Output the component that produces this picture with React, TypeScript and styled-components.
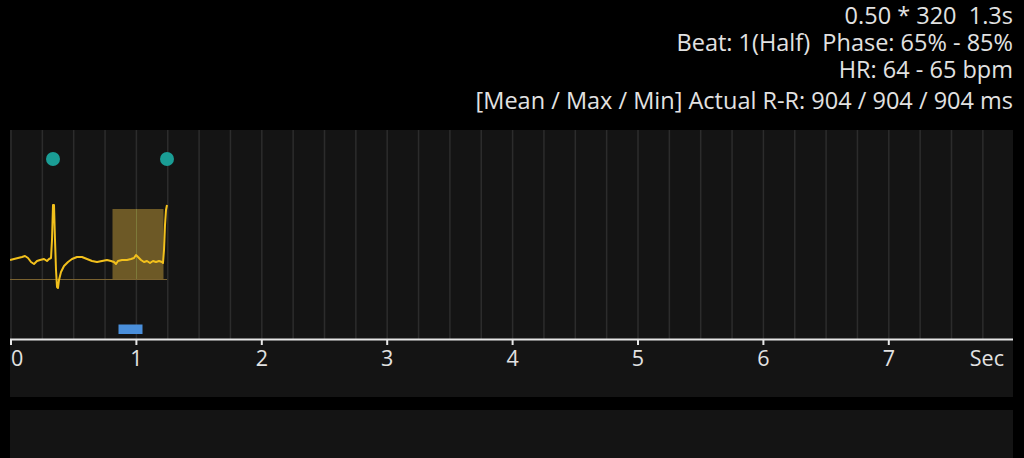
import React from "react";
import styled, { createGlobalStyle } from "styled-components";

const GlobalStyle = createGlobalStyle`
  html, body { margin: 0; padding: 0; background: #000; }
  body { font-family: "Open Sans", "Noto Sans", sans-serif; color: #e2e2e2; overflow: hidden; }
`;

const Page = styled.div`
  width: 1024px;
  display: flex;
  flex-direction: column;
  background: #000;
`;

const Header = styled.header`
  height: 130px;
  flex-shrink: 0;
  box-sizing: border-box;
  padding: 2px 11px 0 0;
  display: flex;
  flex-direction: column;
  align-items: flex-end;
`;

const InfoLine = styled.div<{ $gap?: number }>`
  font-size: 23.5px;
  line-height: 27px;
  white-space: pre;
  color: #e2e2e2;
  margin-top: ${(p) => p.$gap ?? 0}px;
`;

const Panel = styled.section<{ $h: number }>`
  margin: 0 11px 0 10px;
  height: ${(p) => p.$h}px;
  background: #141414;
  flex-shrink: 0;
`;

const Spacer = styled.div`
  height: 13px;
  flex-shrink: 0;
`;

const ChartSvg = styled.svg`
  display: block;
`;

const W = 1003;
const H = 267;
const AXIS_Y = 210;
const PX_PER_SEC = 125.4;
const X0 = 1;
const LABEL_FONT = '"Open Sans", "Noto Sans", sans-serif';

const trace: [number, number][] = [
  [10, 260], [14, 259], [18, 258], [22, 257], [25, 256], [28, 258], [31, 262], [34, 264],
  [37, 261], [40, 260], [44, 259], [47, 261], [49, 259], [51, 258], [52, 240], [53, 205],
  [54, 205], [55, 240], [56, 270], [57, 287], [58, 288], [59, 280], [61, 272], [64, 266],
  [68, 262], [72, 259], [77, 257], [82, 257], [87, 259], [92, 261], [97, 262], [102, 261],
  [107, 260], [111, 261], [114, 262], [116, 264], [118, 261], [122, 260], [127, 260],
  [131, 259], [134, 258], [136, 255], [138, 257], [141, 260], [144, 262], [147, 261],
  [150, 263], [153, 261], [156, 262], [159, 261], [162, 262], [163, 263], [164, 250],
  [165, 225], [166, 210], [167, 205],
];

const tracePath = trace
  .map(([x, y], i) => `${i === 0 ? "M" : "L"}${x - 10} ${y - 130}`)
  .join(" ");

const grid = Array.from({ length: 32 }, (_, k) => X0 + k * (PX_PER_SEC / 4));
const seconds = Array.from({ length: 8 }, (_, s) => s);

function EcgChart() {
  return (
    <ChartSvg width={W} height={H} viewBox={`0 0 ${W} ${H}`}>
      {grid.map((x, i) => (
        <line key={i} x1={x} x2={x} y1={0} y2={AXIS_Y} stroke="#2c2c2c" strokeWidth={1.5} />
      ))}
      <rect x={102.5} y={79} width={51} height={70} fill="#6d5926" />
      <line x1={126.5} x2={126.5} y1={79} y2={149} stroke="#7d7a3a" strokeWidth={1} />
      <line x1={0} x2={157} y1={149.5} y2={149.5} stroke="#7a6230" strokeWidth={1} />
      <path d={tracePath} fill="none" stroke="#f2c01c" strokeWidth={2} strokeLinejoin="round" />
      <circle cx={43} cy={29} r={7} fill="#1a9d95" />
      <circle cx={157} cy={29} r={7} fill="#1a9d95" />
      <rect x={108.5} y={194.5} width={24} height={9.5} fill="#4a8fdb" />
      <line x1={0} x2={W} y1={AXIS_Y - 0.5} y2={AXIS_Y - 0.5} stroke="#e6e6e6" strokeWidth={2} />
      {seconds.map((s) => {
        const x = X0 + s * PX_PER_SEC;
        return (
          <g key={s}>
            <line x1={x} x2={x} y1={AXIS_Y} y2={AXIS_Y + 5} stroke="#e6e6e6" strokeWidth={2} />
            <text
              x={x}
              y={AXIS_Y + 26}
              textAnchor={s === 0 ? "start" : "middle"}
              fill="#e2e2e2"
              fontSize={21.5}
              fontFamily={LABEL_FONT}
            >
              {s}
            </text>
          </g>
        );
      })}
      <text x={994} y={AXIS_Y + 26} textAnchor="end" fill="#e2e2e2" fontSize={21.5} fontFamily={LABEL_FONT}>
        Sec
      </text>
    </ChartSvg>
  );
}

export default function App() {
  return (
    <>
      <GlobalStyle />
      <Page>
        <Header>
          <InfoLine>{"0.50 * 320  1.3s"}</InfoLine>
          <InfoLine>{"Beat: 1(Half)  Phase: 65% - 85%"}</InfoLine>
          <InfoLine>{"HR: 64 - 65 bpm"}</InfoLine>
          <InfoLine $gap={4}>{"[Mean / Max / Min] Actual R-R: 904 / 904 / 904 ms"}</InfoLine>
        </Header>
        <Panel $h={H}>
          <EcgChart />
        </Panel>
        <Spacer />
        <Panel $h={60} />
      </Page>
    </>
  );
}
